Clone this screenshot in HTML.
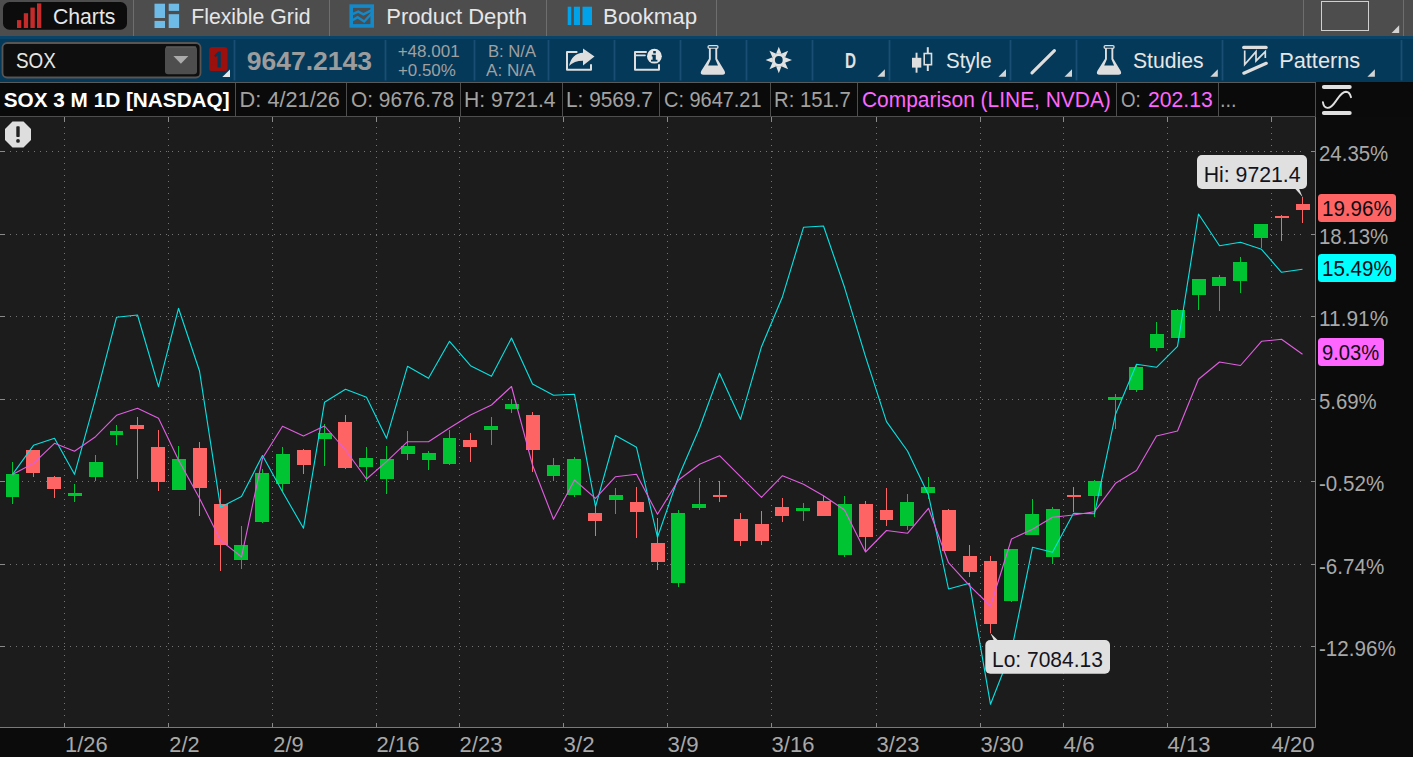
<!DOCTYPE html>
<html><head><meta charset="utf-8"><title>SOX chart</title>
<style>
html,body{margin:0;padding:0}
body{width:1413px;height:757px;overflow:hidden;background:#1c1c1c;position:relative;font-family:"Liberation Sans",sans-serif}
.abs{position:absolute}
.t{position:absolute;white-space:nowrap;transform-origin:0 0}
#tab{left:0;top:0;width:1413px;height:36px;background:#4d4d4d}
#tool{left:0;top:36px;width:1413px;height:46px;background:#04395a;border-top:3px solid #0b4469;box-sizing:border-box}
#hdr{left:0;top:82px;width:1413px;height:35px;background:#0a0a0a}
#hbox{left:0;top:82px;width:1316px;height:35px;box-sizing:border-box;border-top:1px solid #5a5a5a;border-bottom:1px solid #4e4e4e}
#pax{left:1316px;top:117px;width:97px;height:640px;background:#0b0b0b}
#tax{left:0;top:728px;width:1413px;height:29px;background:#0b0b0b}
</style></head><body>
<div class="abs" id="tab"></div>
<div class="abs" id="tool"></div>
<div class="abs" id="hdr"></div>
<div class="abs" id="hbox"></div>
<div class="abs" id="pax"></div>
<div class="abs" id="tax"></div>
<svg class="abs" style="left:0;top:0" width="1413" height="116" viewBox="0 0 1413 116">
<!-- tab bar -->
<rect x="3" y="2.1" width="124" height="27.6" rx="6.5" fill="#0c0c0c"/>
<g fill="#c52b2b"><rect x="17" y="20.1" width="4.3" height="7.9"/><rect x="23.8" y="13.2" width="4.3" height="14.8"/><rect x="30.4" y="7.6" width="4.4" height="20.4"/><rect x="37" y="3.4" width="4.3" height="24.6"/></g>
<g fill="#6ebbe8"><rect x="154.5" y="3.7" width="10.5" height="14.3"/><rect x="154.5" y="20.9" width="10.5" height="7.1"/><rect x="168.7" y="3.7" width="10.4" height="7.2"/><rect x="168.7" y="14.2" width="10.4" height="13.8"/></g>
<g stroke="#1389c9" fill="none"><rect x="351.2" y="6.1" width="21" height="19.8" stroke-width="3.6"/><path d="M352.5 14.2 L358.3 11.7 L363.4 14.3 L371.4 10.4 M352.5 20.3 L357.6 17.2 L364.2 21.5 L371.4 13.8" stroke-width="2.4"/></g>
<g fill="#00a2ea"><rect x="567.7" y="6.7" width="3.6" height="18.3"/><rect x="573.9" y="6.7" width="6.1" height="18.3"/><rect x="582.5" y="6.7" width="9.5" height="18.3"/></g>
<g fill="#6e6e6e"><rect x="133" y="0" width="1" height="36"/><rect x="329" y="0" width="1" height="36"/><rect x="546" y="0" width="1" height="36"/><rect x="716" y="0" width="1" height="36"/><rect x="1303" y="0" width="1" height="36"/><rect x="1403" y="0" width="1" height="36"/></g>
<rect x="1321.5" y="1.5" width="47" height="29" fill="none" stroke="#cfcfcf" stroke-width="1"/>
<path d="M1391.6 33 L1399.2 25.2 V33 Z" fill="#d4d4d4"/>
<!-- toolbar -->
<g fill="#1a4f73"><rect x="233.6" y="40" width="1.8" height="40.5"/><rect x="384.6" y="40" width="1.8" height="40.5"/><rect x="473.6" y="40" width="1.8" height="40.5"/><rect x="547.6" y="40" width="1.8" height="40.5"/><rect x="613.6" y="40" width="1.8" height="40.5"/><rect x="679.6" y="40" width="1.8" height="40.5"/><rect x="745.6" y="40" width="1.8" height="40.5"/><rect x="811.6" y="40" width="1.8" height="40.5"/><rect x="888.6" y="40" width="1.8" height="40.5"/><rect x="1009.6" y="40" width="1.8" height="40.5"/><rect x="1075.6" y="40" width="1.8" height="40.5"/><rect x="1221.6" y="40" width="1.8" height="40.5"/><rect x="1400.6" y="40" width="1.8" height="40.5"/></g>
<rect x="2.5" y="43" width="198" height="34.5" rx="4.5" fill="#0e0e0e" stroke="#595553" stroke-width="1.8"/>
<rect x="165" y="46.4" width="32" height="27.8" rx="3" fill="#4e4e4e"/><rect x="166" y="46.4" width="30" height="1.2" fill="#5c5c5c"/>
<path d="M173.4 56 h15 l-7.5 7.8 z" fill="#ababab"/>
<rect x="209.1" y="47.1" width="18.4" height="24" rx="3.2" fill="#9b100c"/>
<path d="M214.1 55.4 L218.4 51.4 H220.8 V67.4 H217.6 V55.4 L215.5 57.3 Z" fill="#04395a"/>
<path d="M222.3 76.9 L230 69.4 V76.9 Z" fill="#e8e8e8"/>
<!-- share -->
<g fill="none" stroke="#dedede" stroke-width="2" stroke-linejoin="round" stroke-linecap="round"><path d="M576.6 51.9 h-9.6 v17.8 h24 v-4.6"/></g>
<path d="M569 66 C571 57 576 53 583 52.7 V48.5 L594.5 56.6 L583 65.5 V60.8 C577 60.8 572.5 62.5 569 66 Z" fill="#dedede"/>
<!-- info -->
<g fill="none" stroke="#dedede" stroke-width="2" stroke-linejoin="round" stroke-linecap="round"><path d="M646 52 h-11 v17.7 h24 v-4.6"/><path d="M636 55.4 h9" stroke-width="1.6"/></g>
<circle cx="654.4" cy="56.2" r="7.4" fill="#e6e6e6"/>
<rect x="653.2" y="51" width="2.6" height="2.4" fill="#04395a"/><path d="M651.8 54.8 h4 v5 h1.6 v1.6 h-6.4 v-1.6 h1.6 v-3.4 h-0.8 z" fill="#04395a"/>
<g transform="translate(700.3,45)" fill="#dedede"><rect x="7.7" y="0.7" width="10" height="2.7" rx="1.35" fill="none" stroke="#dedede" stroke-width="1.3"/><path d="M8.6 3 V13.7 L0.9 26 Q-0.7 29.8 3.2 29.8 H22 Q25.9 29.8 24.3 26 L16.9 13.7 V3 Z"/><path d="M10.5 3.8 H15 V14.2 L17.7 20.5 H7.8 L10.5 14.2 Z" fill="#04395a"/></g>
<!-- gear -->
<g transform="translate(778.8,60)" fill="#e2e2e2">
<path d="M-2.7 -6.2 L0 -13.2 L2.7 -6.2 Z" transform="rotate(0)"/><path d="M-2.7 -6.2 L0 -13.2 L2.7 -6.2 Z" transform="rotate(45)"/><path d="M-2.7 -6.2 L0 -13.2 L2.7 -6.2 Z" transform="rotate(90)"/><path d="M-2.7 -6.2 L0 -13.2 L2.7 -6.2 Z" transform="rotate(135)"/><path d="M-2.7 -6.2 L0 -13.2 L2.7 -6.2 Z" transform="rotate(180)"/><path d="M-2.7 -6.2 L0 -13.2 L2.7 -6.2 Z" transform="rotate(225)"/><path d="M-2.7 -6.2 L0 -13.2 L2.7 -6.2 Z" transform="rotate(270)"/><path d="M-2.7 -6.2 L0 -13.2 L2.7 -6.2 Z" transform="rotate(315)"/>
<circle r="6.8" /><circle r="3.9" fill="#04395a"/></g>
<path d="M877.4 76.8 L884.9 69.3 V76.8 Z" fill="#d4d4d4"/>
<!-- candle icon -->
<g fill="#dedede"><rect x="915.6" y="52.7" width="1.9" height="20"/><rect x="912" y="57.8" width="9.3" height="9.8"/><rect x="926.8" y="47.2" width="2" height="6"/><rect x="926.8" y="65" width="2" height="6"/></g>
<rect x="924.2" y="53.5" width="7.3" height="11.2" fill="none" stroke="#dedede" stroke-width="1.6"/>
<path d="M998.5 76.8 L1006.0 69.3 V76.8 Z" fill="#d4d4d4"/>
<path d="M1032 72.8 L1054.4 50.6" stroke="#dedede" stroke-width="3.2" stroke-linecap="round"/>
<path d="M1064.5 76.8 L1072.0 69.3 V76.8 Z" fill="#d4d4d4"/>
<g transform="translate(1096.4,45)" fill="#dedede"><rect x="7.7" y="0.7" width="10" height="2.7" rx="1.35" fill="none" stroke="#dedede" stroke-width="1.3"/><path d="M8.6 3 V13.7 L0.9 26 Q-0.7 29.8 3.2 29.8 H22 Q25.9 29.8 24.3 26 L16.9 13.7 V3 Z"/><path d="M10.5 3.8 H15 V14.2 L17.7 20.5 H7.8 L10.5 14.2 Z" fill="#04395a"/></g>
<path d="M1210.3 76.8 L1217.8 69.3 V76.8 Z" fill="#d4d4d4"/>
<!-- patterns -->
<g stroke="#dedede" fill="none" stroke-linecap="round"><path d="M1243.7 47.4 h22.4" stroke-width="3.2"/><path d="M1243.8 73.2 L1266.3 63.3" stroke-width="3.2"/></g><path d="M1244.7 50.6 V64.6 L1256 51.6 V60.9 L1265.3 51.6 V57.9" stroke="#dedede" fill="none" stroke-width="1.7" stroke-linejoin="miter"/>
<path d="M1367.4 76.8 L1374.9 69.3 V76.8 Z" fill="#d4d4d4"/>
<!-- header boxes -->
<g fill="#4e4e4e"><rect x="235" y="83" width="1" height="33"/><rect x="346" y="83" width="1" height="33"/><rect x="460" y="83" width="1" height="33"/><rect x="562" y="83" width="1" height="33"/><rect x="659" y="83" width="1" height="33"/><rect x="770" y="83" width="1" height="33"/><rect x="857" y="83" width="1" height="33"/><rect x="1116" y="83" width="1" height="33"/><rect x="1218" y="83" width="1" height="33"/><rect x="1315" y="83" width="1" height="33"/></g>
<!-- curve icon -->
<g stroke="#e0e0e0" fill="none" stroke-linecap="round"><path d="M1323.9 87 h25.8 M1323.9 113.05 h25.8" stroke-width="4"/><path d="M1322.9 102.2 C1323.5 106.5 1325.5 108 1327.7 107.9 C1332 107.8 1334.5 103 1336.9 99.6 C1340 95 1342.5 91.8 1346 91.75 C1349 91.8 1350.3 94.5 1351 97.2" stroke-width="1.9"/></g>
</svg>
<svg class="abs" style="left:0;top:0" width="1413" height="757" viewBox="0 0 1413 757">
<g shape-rendering="crispEdges">
<line x1="64.5" y1="127" x2="64.5" y2="720" stroke="#747474" stroke-dasharray="1 5"/><rect x="64" y="117" width="1" height="5" fill="#8a8a8a"/><rect x="64" y="723" width="1" height="4" fill="#8a8a8a"/><line x1="168.5" y1="127" x2="168.5" y2="720" stroke="#747474" stroke-dasharray="1 5"/><rect x="168" y="117" width="1" height="5" fill="#8a8a8a"/><rect x="168" y="723" width="1" height="4" fill="#8a8a8a"/><line x1="272.5" y1="127" x2="272.5" y2="720" stroke="#747474" stroke-dasharray="1 5"/><rect x="272" y="117" width="1" height="5" fill="#8a8a8a"/><rect x="272" y="723" width="1" height="4" fill="#8a8a8a"/><line x1="376.5" y1="127" x2="376.5" y2="720" stroke="#747474" stroke-dasharray="1 5"/><rect x="376" y="117" width="1" height="5" fill="#8a8a8a"/><rect x="376" y="723" width="1" height="4" fill="#8a8a8a"/><line x1="459.5" y1="127" x2="459.5" y2="720" stroke="#747474" stroke-dasharray="1 5"/><rect x="459" y="117" width="1" height="5" fill="#8a8a8a"/><rect x="459" y="723" width="1" height="4" fill="#8a8a8a"/><line x1="563.5" y1="127" x2="563.5" y2="720" stroke="#747474" stroke-dasharray="1 5"/><rect x="563" y="117" width="1" height="5" fill="#8a8a8a"/><rect x="563" y="723" width="1" height="4" fill="#8a8a8a"/><line x1="667.5" y1="127" x2="667.5" y2="720" stroke="#747474" stroke-dasharray="1 5"/><rect x="667" y="117" width="1" height="5" fill="#8a8a8a"/><rect x="667" y="723" width="1" height="4" fill="#8a8a8a"/><line x1="771.5" y1="127" x2="771.5" y2="720" stroke="#747474" stroke-dasharray="1 5"/><rect x="771" y="117" width="1" height="5" fill="#8a8a8a"/><rect x="771" y="723" width="1" height="4" fill="#8a8a8a"/><line x1="876.5" y1="127" x2="876.5" y2="720" stroke="#747474" stroke-dasharray="1 5"/><rect x="876" y="117" width="1" height="5" fill="#8a8a8a"/><rect x="876" y="723" width="1" height="4" fill="#8a8a8a"/><line x1="980.5" y1="127" x2="980.5" y2="720" stroke="#747474" stroke-dasharray="1 5"/><rect x="980" y="117" width="1" height="5" fill="#8a8a8a"/><rect x="980" y="723" width="1" height="4" fill="#8a8a8a"/><line x1="1063.5" y1="127" x2="1063.5" y2="720" stroke="#747474" stroke-dasharray="1 5"/><rect x="1063" y="117" width="1" height="5" fill="#8a8a8a"/><rect x="1063" y="723" width="1" height="4" fill="#8a8a8a"/><line x1="1167.5" y1="127" x2="1167.5" y2="720" stroke="#747474" stroke-dasharray="1 5"/><rect x="1167" y="117" width="1" height="5" fill="#8a8a8a"/><rect x="1167" y="723" width="1" height="4" fill="#8a8a8a"/><line x1="1271.5" y1="127" x2="1271.5" y2="720" stroke="#747474" stroke-dasharray="1 5"/><rect x="1271" y="117" width="1" height="5" fill="#8a8a8a"/><rect x="1271" y="723" width="1" height="4" fill="#8a8a8a"/><line x1="10" y1="151.5" x2="1301" y2="151.5" stroke="#747474" stroke-dasharray="1 5"/><rect x="0" y="151" width="5" height="1" fill="#8a8a8a"/><rect x="1311" y="151" width="5" height="1" fill="#8a8a8a"/><line x1="10" y1="234.5" x2="1301" y2="234.5" stroke="#747474" stroke-dasharray="1 5"/><rect x="0" y="234" width="5" height="1" fill="#8a8a8a"/><rect x="1311" y="234" width="5" height="1" fill="#8a8a8a"/><line x1="10" y1="316.5" x2="1301" y2="316.5" stroke="#747474" stroke-dasharray="1 5"/><rect x="0" y="316" width="5" height="1" fill="#8a8a8a"/><rect x="1311" y="316" width="5" height="1" fill="#8a8a8a"/><line x1="10" y1="399.5" x2="1301" y2="399.5" stroke="#747474" stroke-dasharray="1 5"/><rect x="0" y="399" width="5" height="1" fill="#8a8a8a"/><rect x="1311" y="399" width="5" height="1" fill="#8a8a8a"/><line x1="10" y1="481.5" x2="1301" y2="481.5" stroke="#747474" stroke-dasharray="1 5"/><rect x="0" y="481" width="5" height="1" fill="#8a8a8a"/><rect x="1311" y="481" width="5" height="1" fill="#8a8a8a"/><line x1="10" y1="564.5" x2="1301" y2="564.5" stroke="#747474" stroke-dasharray="1 5"/><rect x="0" y="564" width="5" height="1" fill="#8a8a8a"/><rect x="1311" y="564" width="5" height="1" fill="#8a8a8a"/><line x1="10" y1="646.5" x2="1301" y2="646.5" stroke="#747474" stroke-dasharray="1 5"/><rect x="0" y="646" width="5" height="1" fill="#8a8a8a"/><rect x="1311" y="646" width="5" height="1" fill="#8a8a8a"/>
<rect x="0" y="727" width="1316" height="1" fill="#7a7a7a"/>
<rect x="1315" y="117" width="1" height="611" fill="#7a7a7a"/>
<rect x="12" y="462" width="1" height="42" fill="#00c431"/><rect x="6" y="474" width="13" height="23" fill="#00c431"/><rect x="33" y="450" width="1" height="27" fill="#ff6464"/><rect x="26" y="450" width="14" height="23" fill="#ff6464"/><rect x="54" y="476" width="1" height="22" fill="#ff6464"/><rect x="47" y="477" width="14" height="12" fill="#ff6464"/><rect x="74" y="484" width="1" height="18" fill="#00c431"/><rect x="68" y="493" width="14" height="3" fill="#00c431"/><rect x="95" y="455" width="1" height="26" fill="#00c431"/><rect x="89" y="462" width="14" height="15" fill="#00c431"/><rect x="116" y="425" width="1" height="20" fill="#00c431"/><rect x="110" y="431" width="13" height="4" fill="#00c431"/><rect x="137" y="417" width="1" height="62" fill="#ff6464"/><rect x="130" y="425" width="14" height="4" fill="#ff6464"/><rect x="158" y="430" width="1" height="61" fill="#ff6464"/><rect x="151" y="447" width="14" height="35" fill="#ff6464"/><rect x="178" y="446" width="1" height="44" fill="#00c431"/><rect x="172" y="459" width="14" height="31" fill="#00c431"/><rect x="199" y="442" width="1" height="74" fill="#ff6464"/><rect x="193" y="448" width="14" height="40" fill="#ff6464"/><rect x="220" y="489" width="1" height="82" fill="#ff6464"/><rect x="214" y="504" width="14" height="41" fill="#ff6464"/><rect x="241" y="526" width="1" height="43" fill="#00c431"/><rect x="234" y="545" width="14" height="15" fill="#00c431"/><rect x="262" y="469" width="1" height="54" fill="#00c431"/><rect x="255" y="473" width="14" height="49" fill="#00c431"/><rect x="282" y="447" width="1" height="44" fill="#00c431"/><rect x="276" y="454" width="14" height="30" fill="#00c431"/><rect x="303" y="449" width="1" height="25" fill="#ff6464"/><rect x="297" y="450" width="14" height="15" fill="#ff6464"/><rect x="324" y="424" width="1" height="42" fill="#00c431"/><rect x="318" y="433" width="14" height="6" fill="#00c431"/><rect x="345" y="415" width="1" height="54" fill="#ff6464"/><rect x="338" y="422" width="14" height="46" fill="#ff6464"/><rect x="366" y="447" width="1" height="34" fill="#00c431"/><rect x="359" y="458" width="14" height="9" fill="#00c431"/><rect x="386" y="446" width="1" height="48" fill="#00c431"/><rect x="380" y="459" width="14" height="20" fill="#00c431"/><rect x="407" y="431" width="1" height="29" fill="#00c431"/><rect x="401" y="446" width="14" height="8" fill="#00c431"/><rect x="428" y="451" width="1" height="19" fill="#00c431"/><rect x="422" y="453" width="14" height="7" fill="#00c431"/><rect x="449" y="430" width="1" height="35" fill="#00c431"/><rect x="443" y="438" width="13" height="26" fill="#00c431"/><rect x="470" y="433" width="1" height="29" fill="#ff6464"/><rect x="463" y="440" width="14" height="7" fill="#ff6464"/><rect x="491" y="417" width="1" height="28" fill="#00c431"/><rect x="484" y="426" width="14" height="4" fill="#00c431"/><rect x="511" y="399" width="1" height="14" fill="#00c431"/><rect x="505" y="404" width="14" height="5" fill="#00c431"/><rect x="532" y="412" width="1" height="60" fill="#ff6464"/><rect x="526" y="415" width="14" height="35" fill="#ff6464"/><rect x="553" y="458" width="1" height="23" fill="#00c431"/><rect x="547" y="465" width="13" height="11" fill="#00c431"/><rect x="574" y="457" width="1" height="40" fill="#00c431"/><rect x="567" y="459" width="14" height="36" fill="#00c431"/><rect x="595" y="505" width="1" height="31" fill="#ff6464"/><rect x="588" y="513" width="14" height="8" fill="#ff6464"/><rect x="615" y="488" width="1" height="26" fill="#00c431"/><rect x="609" y="495" width="14" height="5" fill="#00c431"/><rect x="636" y="487" width="1" height="51" fill="#ff6464"/><rect x="630" y="502" width="14" height="10" fill="#ff6464"/><rect x="657" y="518" width="1" height="52" fill="#ff6464"/><rect x="651" y="543" width="14" height="19" fill="#ff6464"/><rect x="678" y="510" width="1" height="77" fill="#00c431"/><rect x="671" y="513" width="14" height="70" fill="#00c431"/><rect x="699" y="478" width="1" height="32" fill="#00c431"/><rect x="692" y="504" width="14" height="4" fill="#00c431"/><rect x="719" y="481" width="1" height="21" fill="#ff6464"/><rect x="713" y="495" width="14" height="2" fill="#ff6464"/><rect x="740" y="513" width="1" height="33" fill="#ff6464"/><rect x="734" y="519" width="14" height="22" fill="#ff6464"/><rect x="761" y="511" width="1" height="34" fill="#ff6464"/><rect x="755" y="524" width="14" height="17" fill="#ff6464"/><rect x="782" y="498" width="1" height="24" fill="#ff6464"/><rect x="775" y="507" width="14" height="9" fill="#ff6464"/><rect x="803" y="503" width="1" height="18" fill="#00c431"/><rect x="796" y="508" width="14" height="3" fill="#00c431"/><rect x="823" y="496" width="1" height="20" fill="#ff6464"/><rect x="817" y="501" width="14" height="15" fill="#ff6464"/><rect x="844" y="496" width="1" height="61" fill="#00c431"/><rect x="838" y="504" width="14" height="51" fill="#00c431"/><rect x="865" y="501" width="1" height="51" fill="#ff6464"/><rect x="859" y="504" width="14" height="33" fill="#ff6464"/><rect x="886" y="488" width="1" height="38" fill="#ff6464"/><rect x="880" y="510" width="13" height="10" fill="#ff6464"/><rect x="907" y="494" width="1" height="36" fill="#00c431"/><rect x="900" y="502" width="14" height="24" fill="#00c431"/><rect x="928" y="477" width="1" height="22" fill="#00c431"/><rect x="921" y="487" width="14" height="6" fill="#00c431"/><rect x="948" y="509" width="1" height="42" fill="#ff6464"/><rect x="942" y="510" width="14" height="41" fill="#ff6464"/><rect x="969" y="545" width="1" height="32" fill="#ff6464"/><rect x="963" y="556" width="14" height="16" fill="#ff6464"/><rect x="990" y="556" width="1" height="77" fill="#ff6464"/><rect x="984" y="561" width="13" height="63" fill="#ff6464"/><rect x="1011" y="549" width="1" height="53" fill="#00c431"/><rect x="1004" y="549" width="14" height="52" fill="#00c431"/><rect x="1032" y="499" width="1" height="36" fill="#00c431"/><rect x="1025" y="514" width="14" height="21" fill="#00c431"/><rect x="1052" y="507" width="1" height="57" fill="#00c431"/><rect x="1046" y="509" width="14" height="48" fill="#00c431"/><rect x="1073" y="487" width="1" height="25" fill="#ff6464"/><rect x="1067" y="495" width="14" height="2" fill="#ff6464"/><rect x="1094" y="480" width="1" height="37" fill="#00c431"/><rect x="1088" y="481" width="14" height="15" fill="#00c431"/><rect x="1115" y="394" width="1" height="35" fill="#00c431"/><rect x="1108" y="397" width="14" height="3" fill="#00c431"/><rect x="1136" y="365" width="1" height="27" fill="#00c431"/><rect x="1129" y="367" width="14" height="23" fill="#00c431"/><rect x="1156" y="322" width="1" height="29" fill="#00c431"/><rect x="1150" y="334" width="14" height="14" fill="#00c431"/><rect x="1177" y="309" width="1" height="29" fill="#00c431"/><rect x="1171" y="310" width="14" height="28" fill="#00c431"/><rect x="1198" y="279" width="1" height="31" fill="#00c431"/><rect x="1192" y="279" width="14" height="16" fill="#00c431"/><rect x="1219" y="275" width="1" height="36" fill="#00c431"/><rect x="1212" y="277" width="14" height="9" fill="#00c431"/><rect x="1240" y="257" width="1" height="36" fill="#00c431"/><rect x="1233" y="262" width="14" height="19" fill="#00c431"/><rect x="1261" y="224" width="1" height="24" fill="#00c431"/><rect x="1254" y="224" width="14" height="14" fill="#00c431"/><rect x="1281" y="215" width="1" height="26" fill="#ff6464"/><rect x="1275" y="216" width="14" height="2" fill="#ff6464"/><rect x="1302" y="197" width="1" height="26" fill="#ff6464"/><rect x="1296" y="204" width="14" height="6" fill="#ff6464"/>
</g>
<polyline points="12.5,474.4 33.5,445.3 54.5,438.3 74.5,474.3 95.5,398.3 116.5,317.3 137.5,315.0 158.5,386.7 178.5,308.3 199.5,371.0 220.5,507.3 241.5,496.5 262.5,455.5 282.5,491.8 303.5,528.2 324.5,402.3 345.5,389.3 366.5,397.3 386.5,438.3 407.5,366.3 428.5,378.3 449.5,341.3 470.5,365.7 491.5,376.3 511.5,338.0 532.5,384.0 553.5,395.2 574.5,394.3 595.5,506.7 615.5,435.5 636.5,447.3 657.5,537.3 678.5,476.7 699.5,428.0 719.5,373.3 740.5,419.3 761.5,346.7 782.5,296.7 803.5,227.3 823.5,226.0 844.5,287.3 865.5,356.7 886.5,421.7 907.5,451.0 928.5,495.0 948.5,589.0 969.5,583.3 990.5,704.3 1011.5,650.5 1032.5,547.3 1052.5,552.3 1073.5,513.3 1094.5,513.8 1115.5,414.3 1136.5,364.3 1156.5,367.3 1177.5,346.3 1198.5,214.0 1219.5,245.7 1240.5,242.3 1261.5,249.3 1281.5,272.3 1302.5,269.3" fill="none" stroke="#08e2e2" stroke-width="1.12" stroke-linejoin="round"/>
<polyline points="12.5,474.4 33.5,463.3 54.5,443.3 74.5,451.3 95.5,436.7 116.5,415.3 137.5,408.3 158.5,418.3 178.5,460.0 199.5,498.3 220.5,540.2 241.5,556.9 262.5,458.3 282.5,426.3 303.5,436.0 324.5,426.0 345.5,450.0 366.5,479.0 386.5,461.7 407.5,441.7 428.5,441.7 449.5,428.0 470.5,415.0 491.5,405.0 511.5,386.5 532.5,465.0 553.5,519.3 574.5,480.0 595.5,498.3 615.5,476.7 636.5,474.3 657.5,514.3 678.5,480.0 699.5,464.3 719.5,455.7 740.5,476.7 761.5,497.3 782.5,475.7 803.5,484.3 823.5,495.7 844.5,510.0 865.5,552.0 886.5,530.5 907.5,533.3 928.5,508.3 948.5,562.7 969.5,585.7 990.5,606.0 1011.5,539.0 1032.5,529.3 1052.5,517.3 1073.5,515.0 1094.5,511.7 1115.5,483.3 1136.5,470.5 1156.5,436.0 1177.5,431.0 1198.5,379.3 1219.5,362.0 1240.5,365.5 1261.5,341.3 1281.5,339.3 1302.5,354.3" fill="none" stroke="#e05ee0" stroke-width="1.12" stroke-linejoin="round"/>
<!-- Hi bubble -->
<path d="M1294.5 188 L1302.6 197 L1298.8 188 Z" fill="#e0e0e0"/>
<rect x="1197" y="155" width="110" height="34" rx="5" fill="#e0e0e0"/>
<!-- Lo bubble -->
<path d="M990.3 633 L994.2 641 L998.6 641 Z" fill="#e0e0e0"/>
<rect x="985.3" y="640" width="124.7" height="33.8" rx="5" fill="#e0e0e0"/>
<!-- price tags -->
<rect x="1318" y="194" width="78" height="28" rx="3.5" fill="#ff6464"/>
<rect x="1318" y="254" width="78" height="28" rx="3.5" fill="#00ffff"/>
<rect x="1318" y="338" width="66" height="28" rx="3.5" fill="#ff66ff"/>
<!-- octagon -->
<path d="M12.5 121.5 h11 l7.5 7.5 v11 l-7.5 7.5 h-11 l-7.5 -7.5 v-11 z" fill="#dedede"/>
<rect x="16.3" y="126.3" width="3.4" height="10.8" rx="0.8" fill="#222"/><rect x="16.1" y="139" width="3.8" height="3.8" rx="1.9" fill="#222"/>
</svg>
<div class="t" style="left:52.90px;top:7px;font-size:21.25px;line-height:21.25px;color:#e6e6e6;">Charts</div>
<div class="t" style="left:191.20px;top:7px;font-size:21.25px;line-height:21.25px;color:#e6e6e6;">Flexible Grid</div>
<div class="t" style="left:386.30px;top:6px;font-size:22px;line-height:22px;color:#e6e6e6;">Product Depth</div>
<div class="t" style="left:603.10px;top:6px;font-size:22.25px;line-height:22.25px;color:#e6e6e6;">Bookmap</div>
<div class="t" style="left:16.20px;top:51px;font-size:21.25px;line-height:21.25px;color:#e6e6e6;transform:scaleX(0.8876);">SOX</div>
<div class="t" style="left:246.70px;top:48px;font-size:26.5px;line-height:26.5px;color:#9c9c9c;font-weight:bold;">9647.2143</div>
<div class="t" style="left:397.70px;top:43px;font-size:17px;line-height:17px;color:#a0a0a0;">+48.001</div>
<div class="t" style="left:397.70px;top:62px;font-size:17px;line-height:17px;color:#a0a0a0;transform:scaleX(0.9942);">+0.50%</div>
<div class="t" style="left:487.60px;top:44px;font-size:16.75px;line-height:16.75px;color:#a0a0a0;transform:scaleX(0.9919);">B: N/A</div>
<div class="t" style="left:486.20px;top:62px;font-size:17px;line-height:17px;color:#a0a0a0;transform:scaleX(1.0058);">A: N/A</div>
<div class="t" style="left:844.90px;top:51px;font-size:21.25px;line-height:21.25px;color:#e2e2e2;transform:scaleX(0.7190);font-weight:bold;">D</div>
<div class="t" style="left:945.90px;top:51px;font-size:21.25px;line-height:21.25px;color:#e6e6e6;transform:scaleX(0.9644);">Style</div>
<div class="t" style="left:1132.90px;top:51px;font-size:21.25px;line-height:21.25px;color:#e6e6e6;transform:scaleX(0.9948);">Studies</div>
<div class="t" style="left:1279.20px;top:50px;font-size:21.75px;line-height:21.75px;color:#e6e6e6;">Patterns</div>
<div class="t" style="left:3.70px;top:90px;font-size:20.75px;line-height:20.75px;color:#ffffff;font-weight:bold;">SOX 3 M 1D [NASDAQ]</div>
<div class="t" style="left:239.60px;top:89px;font-size:21.75px;line-height:21.75px;color:#a2a2a2;">D: 4/21/26</div>
<div class="t" style="left:351.00px;top:90px;font-size:21.25px;line-height:21.25px;color:#a2a2a2;transform:scaleX(0.9811);">O: 9676.78</div>
<div class="t" style="left:464.30px;top:90px;font-size:21.25px;line-height:21.25px;color:#a2a2a2;transform:scaleX(0.9933);">H: 9721.4</div>
<div class="t" style="left:566.20px;top:90px;font-size:21.25px;line-height:21.25px;color:#a2a2a2;transform:scaleX(0.9795);">L: 9569.7</div>
<div class="t" style="left:664.30px;top:90px;font-size:21.25px;line-height:21.25px;color:#a2a2a2;transform:scaleX(0.9383);">C: 9647.21</div>
<div class="t" style="left:774.40px;top:90px;font-size:21.25px;line-height:21.25px;color:#a2a2a2;transform:scaleX(0.9549);">R: 151.7</div>
<div class="t" style="left:861.90px;top:90px;font-size:21.25px;line-height:21.25px;color:#ff66ff;transform:scaleX(0.9847);">Comparison (LINE, NVDA)</div>
<div class="t" style="left:1121.30px;top:90px;font-size:21.25px;line-height:21.25px;color:#a2a2a2;transform:scaleX(0.8787);">O:</div>
<div class="t" style="left:1147.60px;top:90px;font-size:21.25px;line-height:21.25px;color:#ff66ff;transform:scaleX(0.9950);">202.13</div>
<div class="t" style="left:1220.30px;top:90px;font-size:21.25px;line-height:21.25px;color:#a2a2a2;transform:scaleX(0.9412);">...</div>
<div class="t" style="left:1318.90px;top:144px;font-size:21.25px;line-height:21.25px;color:#a8a8a8;transform:scaleX(0.9606);">24.35%</div>
<div class="t" style="left:1318.90px;top:227px;font-size:21.25px;line-height:21.25px;color:#a8a8a8;transform:scaleX(0.9606);">18.13%</div>
<div class="t" style="left:1318.90px;top:309px;font-size:21.25px;line-height:21.25px;color:#a8a8a8;transform:scaleX(0.9823);">11.91%</div>
<div class="t" style="left:1318.90px;top:392px;font-size:21.25px;line-height:21.25px;color:#a8a8a8;transform:scaleX(0.9561);">5.69%</div>
<div class="t" style="left:1318.50px;top:474px;font-size:21.25px;line-height:21.25px;color:#a8a8a8;transform:scaleX(0.9679);">-0.52%</div>
<div class="t" style="left:1318.50px;top:557px;font-size:21.25px;line-height:21.25px;color:#a8a8a8;transform:scaleX(0.9679);">-6.74%</div>
<div class="t" style="left:1318.50px;top:639px;font-size:21.25px;line-height:21.25px;color:#a8a8a8;transform:scaleX(0.9702);">-12.96%</div>
<div class="t" style="left:64.90px;top:734px;font-size:22px;line-height:22px;color:#a8a8a8;transform:scaleX(0.9956);">1/26</div>
<div class="t" style="left:169.30px;top:734px;font-size:21.75px;line-height:21.75px;color:#a8a8a8;">2/2</div>
<div class="t" style="left:273.30px;top:734px;font-size:21.75px;line-height:21.75px;color:#a8a8a8;">2/9</div>
<div class="t" style="left:376.60px;top:734px;font-size:22px;line-height:22px;color:#a8a8a8;">2/16</div>
<div class="t" style="left:459.60px;top:734px;font-size:22px;line-height:22px;color:#a8a8a8;">2/23</div>
<div class="t" style="left:563.60px;top:734px;font-size:22.25px;line-height:22.25px;color:#a8a8a8;">3/2</div>
<div class="t" style="left:667.60px;top:734px;font-size:22.25px;line-height:22.25px;color:#a8a8a8;">3/9</div>
<div class="t" style="left:771.60px;top:734px;font-size:22px;line-height:22px;color:#a8a8a8;">3/16</div>
<div class="t" style="left:876.60px;top:734px;font-size:22px;line-height:22px;color:#a8a8a8;">3/23</div>
<div class="t" style="left:980.60px;top:734px;font-size:22px;line-height:22px;color:#a8a8a8;">3/30</div>
<div class="t" style="left:1063.60px;top:734px;font-size:22.25px;line-height:22.25px;color:#a8a8a8;">4/6</div>
<div class="t" style="left:1167.60px;top:734px;font-size:22px;line-height:22px;color:#a8a8a8;">4/13</div>
<div class="t" style="left:1271.60px;top:734px;font-size:22px;line-height:22px;color:#a8a8a8;">4/20</div>
<div class="t" style="left:1203.70px;top:165px;font-size:21.25px;line-height:21.25px;color:#14141c;">Hi: 9721.4</div>
<div class="t" style="left:992.00px;top:650px;font-size:21.25px;line-height:21.25px;color:#14141c;transform:scaleX(0.9875);">Lo: 7084.13</div>
<div class="t" style="left:1322.30px;top:199px;font-size:21.25px;line-height:21.25px;color:#0c0c14;transform:scaleX(0.9676);">19.96%</div>
<div class="t" style="left:1322.30px;top:259px;font-size:21.25px;line-height:21.25px;color:#0c0c14;transform:scaleX(0.9676);">15.49%</div>
<div class="t" style="left:1322.30px;top:343px;font-size:21.25px;line-height:21.25px;color:#0c0c14;transform:scaleX(0.9495);">9.03%</div>
</body></html>
